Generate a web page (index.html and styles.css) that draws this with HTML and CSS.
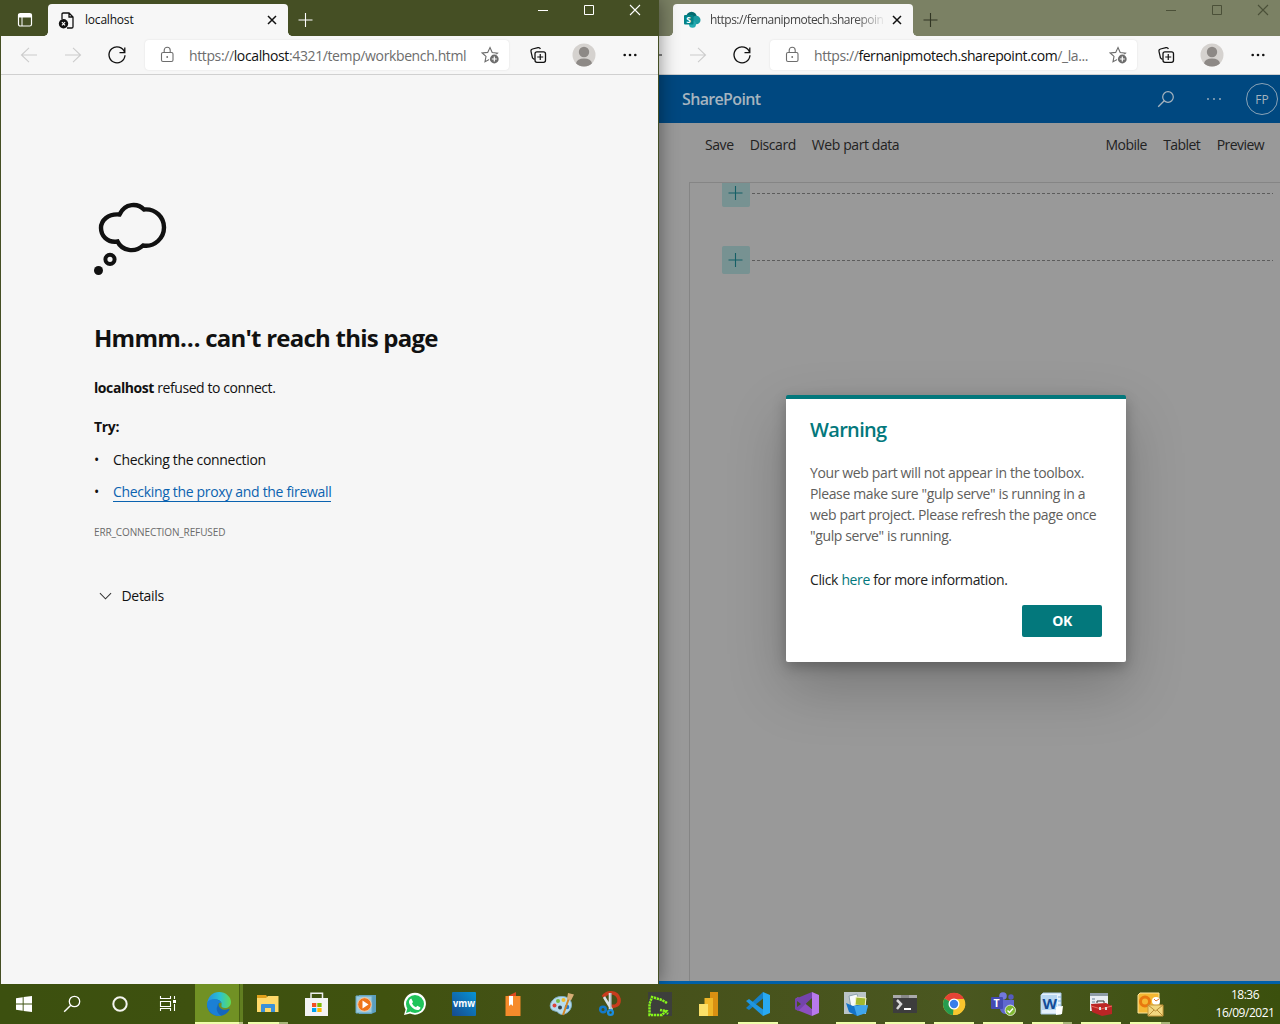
FILE: index.html
```html
<!DOCTYPE html>
<html lang="en">
<head>
<meta charset="utf-8">
<title>Desktop</title>
<link rel="stylesheet" href="styles.css">
</head>
<body>
<svg class="defs" aria-hidden="true">
  <symbol id="back" viewBox="0 0 20 20"><path d="M18 10H2.500M10 2.800 2.500 10l7.500 7.200" fill="none" stroke="currentColor" stroke-width="1.100"/></symbol>
  <symbol id="reload" viewBox="0 0 20 20"><path d="M17.600 7.300A8 8 0 1 0 18 10.300M17.800 2.500v5.200h-5.300" fill="none" stroke="currentColor" stroke-width="1.300"/></symbol>
  <symbol id="lock" viewBox="0 0 16 18"><rect x="2.500" y="6.500" width="11.500" height="9" rx="1.500" fill="none" stroke="currentColor" stroke-width="1.100"/><path d="M5.200 6.500V4.200a3 3 0 0 1 6 0v2.300" fill="none" stroke="currentColor" stroke-width="1.100"/><circle cx="8.200" cy="11" r=".9" fill="currentColor"/></symbol>
  <symbol id="star" viewBox="0 0 18 18"><path d="m9 1.500 2.200 5 5.300.6-4 3.600L13 15l-4-2-5 2.700 1-5.300L1.200 7l5.500-.6z" fill="none" stroke="currentColor" stroke-width="1.100"/><circle cx="13.300" cy="13" r="5.300" fill="#fff"/><circle cx="13.300" cy="13" r="4.400" fill="currentColor"/><path d="M13.300 10.500v5M10.800 13h5" stroke="#fff" stroke-width="1.200"/></symbol>
  <symbol id="collections" viewBox="0 0 18 18"><path d="M3.500 12 2 5.500Q1.600 3.500 3.500 3L9 1.600q1.800-.4 2.400 1.400M5.500 13.500 3.500 12" fill="none" stroke="currentColor" stroke-width="1.200"/><rect x="6" y="5.800" width="10.500" height="10.500" rx="2" fill="#f7f7f7" stroke="currentColor" stroke-width="1.300"/><path d="M11.250 8v6M8.250 11h6" stroke="currentColor" stroke-width="1.200"/></symbol>
  <symbol id="avatar" viewBox="0 0 24 24"><circle cx="12" cy="12" r="11.500" fill="#d5d2cf"/><circle cx="12" cy="9" r="5.200" fill="#8d8986"/><path d="M4 20.200Q5 15.500 12 15.500t8 4.700a11.500 11.500 0 0 1-16 0" fill="#8d8986"/></symbol>
  <symbol id="dots" viewBox="0 0 16 16"><g fill="currentColor"><circle cx="2.700" cy="8" r="1.300"/><circle cx="8" cy="8" r="1.300"/><circle cx="13.300" cy="8" r="1.300"/></g></symbol>
  <symbol id="thindots" viewBox="0 0 16 16"><g fill="currentColor"><circle cx="2" cy="8" r=".9"/><circle cx="8" cy="8" r=".9"/><circle cx="14" cy="8" r=".9"/></g></symbol>
  <symbol id="min" viewBox="0 0 12 12"><path d="M1 6.500h10" stroke="currentColor"/></symbol>
  <symbol id="max" viewBox="0 0 12 12"><path d="M1.500 1.500h9v9h-9z" fill="none" stroke="currentColor"/></symbol>
  <symbol id="close" viewBox="0 0 12 12"><path d="m1 1 10 10M11 1 1 11" stroke="currentColor" stroke-width="1.100"/></symbol>
  <symbol id="tabclose" viewBox="0 0 12 12"><path d="m2 2 8 8M10 2 2 10" stroke="currentColor" stroke-width="1.500"/></symbol>
  <symbol id="plus" viewBox="0 0 16 16"><path d="M7.500 1v14M.5 8h14" stroke="currentColor" stroke-width="1.100"/></symbol>
</svg>

<div class="desktop">
  <section class="window window-right">
    <header class="titlebar">
      <div class="tab">
        <svg class="favicon" viewBox="0 0 18 18"><circle cx="8.500" cy="6" r="5.300" fill="#036c70"/><circle cx="13.200" cy="9" r="4.300" fill="#1a9ba1"/><circle cx="9.500" cy="13.300" r="3.500" fill="#24aab0"/><rect x="1" y="4" width="9.500" height="9.500" rx="1" fill="#038387"/><text x="3.200" y="11.800" font-size="8.500" font-weight="700" fill="#fff">S</text></svg>
        <span class="tab-title faded">https://fernanipmotech.sharepoin</span>
        <svg class="tab-x"><use href="#tabclose"/></svg>
      </div>
      <svg class="newtab"><use href="#plus"/></svg>
      <div class="controls"><svg><use href="#min"/></svg><svg><use href="#max"/></svg><svg><use href="#close"/></svg></div>
    </header>
    <nav class="toolbar">
      <svg class="nav"><use href="#back"/></svg>
      <svg class="nav off flip"><use href="#back"/></svg>
      <svg class="nav"><use href="#reload"/></svg>
      <div class="address"><svg class="lock"><use href="#lock"/></svg><span class="url url-sp">https://<b>fernanipmotech.sharepoint.com</b>/_la...</span><svg class="star"><use href="#star"/></svg></div>
      <svg class="coll"><use href="#collections"/></svg>
      <svg class="avatar"><use href="#avatar"/></svg>
      <svg class="dots"><use href="#dots"/></svg>
    </nav>
    <main class="sharepoint">
      <header class="suite">
        <span class="brand">SharePoint</span>
        <svg class="suite-search" viewBox="0 0 18 18"><circle cx="11" cy="7" r="5.300" fill="none" stroke="currentColor" stroke-width="1.200"/><path d="m7.200 10.800-6 6" stroke="currentColor" stroke-width="1.300"/></svg>
        <svg class="suite-dots"><use href="#thindots"/></svg>
        <span class="persona">FP</span>
      </header>
      <div class="commands"><span>Save</span><span>Discard</span><span class="grow">Web part data</span><span>Mobile</span><span>Tablet</span><span>Preview</span></div>
      <div class="canvas">
        <div class="zone"><i><svg><use href="#plus"/></svg></i><hr></div>
        <div class="zone"><i><svg><use href="#plus"/></svg></i><hr></div>
      </div>
    </main>
    <div class="dialog">
      <h2>Warning</h2>
      <p class="message">Your web part will not appear in the toolbox.<br>Please make sure "gulp serve" is running in a<br>web part project. Please refresh the page once<br>"gulp serve" is running.</p>
      <p class="info">Click <a>here</a> for more information.</p>
      <button>OK</button>
    </div>
  </section>

  <section class="window window-left">
    <header class="titlebar">
      <svg class="tabmenu" viewBox="0 0 16 16"><rect x="1.500" y="1.500" width="13" height="12.500" rx="1.800" fill="none" stroke="#fff" stroke-width="1.200"/><path d="M1.500 2h13v3.500h-13z" fill="#fff"/><path d="M5 5v9" stroke="#fff"/></svg>
      <div class="tab">
        <svg class="favicon" viewBox="0 0 18 18"><path d="M4 8V3.300Q4 2 5.300 2H11l4 4v9.700q0 1.300-1.300 1.300H9M11 2v4h4" fill="none" stroke="#111" stroke-width="1.300"/><circle cx="5.500" cy="12.800" r="4.700" fill="#111"/><path d="m3.900 11.200 3.200 3.200m0-3.200-3.200 3.200" stroke="#fff" stroke-width="1.100"/></svg>
        <span class="tab-title">localhost</span>
        <svg class="tab-x"><use href="#tabclose"/></svg>
      </div>
      <svg class="newtab"><use href="#plus"/></svg>
      <div class="controls"><svg><use href="#min"/></svg><svg><use href="#max"/></svg><svg><use href="#close"/></svg></div>
    </header>
    <nav class="toolbar">
      <svg class="nav off"><use href="#back"/></svg>
      <svg class="nav off flip"><use href="#back"/></svg>
      <svg class="nav"><use href="#reload"/></svg>
      <div class="address"><svg class="lock"><use href="#lock"/></svg><span class="url">https://<b>localhost</b>:4321/temp/workbench.html</span><svg class="star"><use href="#star"/></svg></div>
      <svg class="coll"><use href="#collections"/></svg>
      <svg class="avatar"><use href="#avatar"/></svg>
      <svg class="dots"><use href="#dots"/></svg>
    </nav>
    <main class="error">
      <svg class="cloud" viewBox="0 0 74 74"><path d="M25.500 11.500C31 -.5 44 0 50 6.500c12-1 20 8 20 18s-9 20-21 18C41 50 28 48 23.500 38.500 13 40 7 32.500 7 25S14 10.500 25.500 11.500z" fill="none" stroke="#111" stroke-width="4.400"/><circle cx="16" cy="56.300" r="4.600" fill="none" stroke="#111" stroke-width="4"/><circle cx="4.500" cy="67.500" r="4.500" fill="#111"/></svg>
      <h1>Hmmm… can't reach this page</h1>
      <p class="refused"><b>localhost</b> refused to connect.</p>
      <h3>Try:</h3>
      <ul><li>Checking the connection</li><li><a>Checking the proxy and the firewall</a></li></ul>
      <p class="code">ERR_CONNECTION_REFUSED</p>
      <div class="details"><svg viewBox="0 0 14 8"><path d="m1 1 6 6 6-6" fill="none" stroke="#333" stroke-width="1.100"/></svg><span>Details</span></div>
    </main>
  </section>

  <footer class="taskbar">
    <div class="sys"><svg viewBox="0 0 24 24"><path d="M4 6.200 10.700 5.200v6.300H4zM11.600 5.100 20 4v7.500h-8.400zM4 12.500h6.700v6.300L4 17.800zM11.600 12.500H20V20l-8.400-1.100z" fill="#fff"/></svg></div>
    <div class="sys"><svg viewBox="0 0 24 24"><circle cx="14.500" cy="9.500" r="5.200" fill="none" stroke="#fff" stroke-width="1.300"/><path d="m10.800 13.200-6.600 6.600" stroke="#fff" stroke-width="1.400"/></svg></div>
    <div class="sys"><svg viewBox="0 0 24 24"><circle cx="12" cy="12" r="6.700" fill="none" stroke="#f4f4ee" stroke-width="2"/></svg></div>
    <div class="sys"><svg viewBox="0 0 24 24"><path d="M4.500 4v2.500h10V4M4.500 19v-2.500h10V19M4.500 9.500h10v5h-10zM18.500 4v3M18.500 12v7" fill="none" stroke="#fff" stroke-width="1.100"/><path d="M17 8h3v3h-3z" fill="#fff"/></svg></div>
    <div class="app active"><svg viewBox="0 0 24 24"><defs><linearGradient id="eg" x2="1"><stop stop-color="#258fe0"/><stop offset=".55" stop-color="#2bc3d2"/><stop offset="1" stop-color="#63db52"/></linearGradient></defs><path d="M0 12c0 7 5 12 12 12 5 0 9-3 10.500-6.500.3-.8-.3-1-1-.6-4 2-10 0-10-5L14 8 6 6z" fill="#1467bd"/><path d="M0 12C1 4 6 0 12 0c7 0 12 5 12 10 0 4-3 6-6 6-2.500 0-4-1-3.500-2.500C15.500 10 12.500 7.500 9 7.500S1 8.500 0 12z" fill="url(#eg)"/><path d="M0 12c0-3 4-5.500 8.500-4.500C12 8 14 9 14.500 11c-2-1-4 0-4 3-2 3 0 8 4 9.700C6 25 0 19 0 12z" fill="#1b80d5"/></svg></div>
    <div class="app open multi"><svg viewBox="0 0 24 24"><path d="M1 3h9l2 2.500h10V20H1z" fill="#e0a11b"/><path d="M1 6h9l2-2h10.500v16H1z" fill="#ffd96a"/><path d="M5 20v-7q0-1 1-1h12q1 0 1 1v7h-4v-4H9v4z" fill="#3b91da"/></svg></div>
    <div class="app"><svg viewBox="0 0 24 24"><path d="M6 7V1.200h11.500V7" fill="none" stroke="#eee" stroke-width="1.500"/><path d="M0 6h23v18H0z" fill="#f3f3f3"/><path d="M7 11h4.300v4H7z" fill="#f25022"/><path d="M12.300 11h4.300v4h-4.300z" fill="#7fba00"/><path d="M7 16h4.300v4H7z" fill="#00a4ef"/><path d="M12.300 16h4.300v4h-4.300z" fill="#ffb900"/></svg></div>
    <div class="app"><svg viewBox="0 0 24 24"><path d="M5 3h17v17l-5 2H5z" fill="#5b9fbe"/><path d="M2 4h16v17H2z" fill="#9acbe0" stroke="#6ba8c3"/><circle cx="10.500" cy="12.500" r="6.800" fill="#ef751a" stroke="#f7c8a0"/><path d="m8.500 8.500 6 4-6 4z" fill="#fff"/></svg></div>
    <div class="app"><svg viewBox="0 0 24 24"><path d="M1 23 2.600 17.500A11 11 0 1 1 7 21.500z" fill="#fff"/><circle cx="12" cy="12" r="9" fill="#20c45a"/><path d="m3 21 1.500-5 3 3.500z" fill="#20c45a"/><path d="M8.300 6.500 10 10 9 11.500q1.500 3 4 3.800l1.300-1.500 3.200 1.700c-.5 3-3.500 3-6 1.700-3-1.600-5.200-4.500-5.500-7 0-2 1-3.500 2.300-3.700z" fill="#fff"/></svg></div>
    <div class="app"><svg viewBox="0 0 24 24"><defs><linearGradient id="vg" x1="0" y1="1" x2="1" y2="0"><stop stop-color="#174a8e"/><stop offset="1" stop-color="#0793d4"/></linearGradient></defs><rect width="24" height="24" rx="1" fill="url(#vg)"/><text class="vmw" x="1" y="15" textLength="22" lengthAdjust="spacingAndGlyphs">vmw</text></svg></div>
    <div class="app"><svg viewBox="0 0 24 24"><path d="m7 4 8-4v4z" fill="#dd4920"/><path d="M4.500 4h15v20h-15z" fill="#f68b2b"/><path d="M8 4h4v10l-2-1.800L8 14z" fill="#fff"/></svg></div>
    <div class="app"><svg viewBox="0 0 24 24"><path d="M12 4.500C4 4-1 11 .500 15.500 2 20 6 18 8.500 21c4 4 13-1 13-8 0-5.500-4-8.500-9.500-8.500z" fill="#b7dcec" stroke="#7eadc3"/><circle cx="4.500" cy="13.500" r="2" fill="#db443b"/><circle cx="8" cy="9" r="2" fill="#76b944"/><circle cx="13.500" cy="8" r="2" fill="#efbb29"/><circle cx="10" cy="15.500" r="2" fill="#36424a"/><circle cx="17" cy="15" r="2.300" fill="#287ac8"/><path d="m19 6-6 17" stroke="#d48626" stroke-width="2"/><path d="m17 7 1-6 6 1.500-3 6z" fill="#d6ad75"/></svg></div>
    <div class="app"><svg viewBox="0 0 24 24"><path d="M4 5C8-1 18-1 20 7c1 6-4 8-8 7" fill="none" stroke="#c93c1d" stroke-width="3.500"/><path d="M11 1v16M5 5l8 13" stroke="#d9e1e5" stroke-width="2.600"/><path d="M12 1v16" stroke="#9ba8ad"/><circle cx="4" cy="17.500" r="2.800" fill="none" stroke="#1379ca" stroke-width="2.500"/><circle cx="11.500" cy="20.500" r="2.400" fill="none" stroke="#1a8de0" stroke-width="2.300"/></svg></div>
    <div class="app"><svg viewBox="0 0 24 24"><path d="M0 0h24v24H0z" fill="#3d3f3b"/><path d="M19 11 14 8 4 5 1.500 12v11H14l4-4-6-1m5 1 3 3" fill="none" stroke="#86f51a" stroke-width="2.500" stroke-dasharray="2.300 .7"/></svg></div>
    <div class="app"><svg viewBox="0 0 24 24"><path d="M13 0h8v24h-8z" fill="#d99012"/><path d="M7.500 6H16v18H7.500z" fill="#efb728"/><path d="M2 12h9v12H2z" fill="#fae068"/></svg></div>
    <div class="app open"><svg viewBox="0 0 24 24"><path d="M0 16 17 0v6.500L3 18z" fill="#1580c8"/><path d="m0 9 3-2 14 10.500V24z" fill="#2096df"/><path d="m17 0 7 3v18l-7 3z" fill="#28a9f2"/></svg></div>
    <div class="app"><svg viewBox="0 0 24 24"><path d="m0 7 3-2 14 12v7L2 18l-2-1z" fill="#8c4fc1"/><path d="m0 17 3 2L17 6V0L0 7z" fill="#7444ab"/><path d="m2 9 4 3-4 3zm15-2-6 5 6 5z" fill="#47551d"/><path d="m17 0 7 3v18l-7 3z" fill="#b879ec"/></svg></div>
    <div class="app open"><svg viewBox="0 0 24 24"><path d="M0 0h22v22H0z" fill="#bac4c7"/><path d="m5 4 8-2 3 12-9 2z" fill="#f7fbfc" stroke="#8da1ac"/><path d="m12 5 10 1-1 8-10-1z" fill="#a1b830" stroke="#f5f5cb"/><path d="m2 11 7 3 4-1 11 1-2 7-9 3-8-4z" fill="#1473c8"/><path d="m10 14 14-1-2 8-9 3z" fill="#40a6ec"/></svg></div>
    <div class="app open"><svg viewBox="0 0 24 24"><path d="M0 3h24v18H0z" fill="#3d3d3d"/><path d="M0 3h24v3H0z" fill="#aaa"/><path d="M8 3h8v3H8z" fill="#888"/><path d="m4 8 4 4-4 5" fill="none" stroke="#d8d8d8" stroke-width="2.500"/><path d="M11 17h7" stroke="#fff" stroke-width="2"/></svg></div>
    <div class="app open"><svg viewBox="0 0 24 24"><circle cx="12" cy="12" r="11" fill="#f8c52e"/><path d="M12 12 2.500 6.500A11 11 0 0 1 22 7z" fill="#e54335"/><path d="M12 12 2.500 6.500A11 11 0 0 0 11 23l4.500-8z" fill="#279b4e"/><path d="M12 7h10A11 11 0 0 1 11 23z" fill="#f8c52e"/><circle cx="12" cy="12" r="5.500" fill="#fff"/><circle cx="12" cy="12" r="4.200" fill="#397de9"/></svg></div>
    <div class="app open"><svg viewBox="0 0 24 24"><circle cx="12" cy="4" r="3.800" fill="#7278dc"/><circle cx="20" cy="5" r="2.700" fill="#555bc0"/><path d="M9 8h14v8q-2 6-8 6-5 0-6-5z" fill="#6068ce"/><rect y="5" width="12" height="12" rx="1" fill="#454bb2"/><text x="2.600" y="15" font-size="10.500" font-weight="700" fill="#fff">T</text><circle cx="19.300" cy="18.300" r="5.200" fill="#7fb831" stroke="#fff" stroke-width=".7"/><path d="m16.500 18.500 2 2 3.500-4" fill="none" stroke="#fff" stroke-width="1.400"/></svg></div>
    <div class="app open multi"><svg viewBox="0 0 24 24"><path d="M3 1h18v21H1V3z" fill="#e7f2fc" stroke="#a8c7e4"/><path d="M2 3h15v15H2z" fill="#b8d7f2"/><text class="w" x="2.500" y="16.500">W</text><path d="M18 5h3m-3 4h3m-3 4h3" stroke="#80b3df"/><path d="m16 15 7-1-1 8-6 1z" fill="#fff"/></svg></div>
    <div class="app open"><svg viewBox="0 0 24 24"><path d="M1 1h18v18H1z" fill="#e9eef3"/><path d="M1 1h18v3H1z" fill="#8f9da7"/><path d="M3 7h3m-3 3h3m-3 3h3" stroke="#68839a"/><path d="M2 12 17 11l6 3v8l-10 2-10-4z" fill="#bb2525"/><path d="m2 14 10 3 11-3" fill="none" stroke="#ee6a60"/><path d="M8 11V9h7v2" fill="none" stroke="#333"/><path d="M10 15h2v3h-2m6-3h2v3h-2" fill="#ddd"/></svg></div>
    <div class="app open multi"><svg viewBox="0 0 24 24"><path d="M2 1h19v20H0V3z" fill="#f4b833" stroke="#fbe39a"/><circle cx="7" cy="9.500" r="4.500" fill="none" stroke="#e8780f" stroke-width="3"/><circle cx="18" cy="9" r="4" fill="#fff"/><path d="m16 7 2 2 3-2" fill="none" stroke="#dd762c"/><path d="M10 13h15v11H10z" fill="#f2d77f" stroke="#c7983c"/><path d="m10 13 7.500 6 7.500-6M10 24l6-6m3 0 6 6" fill="none" stroke="#ba8d35"/></svg></div>
    <div class="clock"><span class="time">18:36</span><span class="date">16/09/2021</span></div>
  </footer>
</div>
</body>
</html>
```
FILE: styles.css
```css
* { box-sizing: border-box; }
body { margin: 0; font-family: "Open Sans", "Noto Sans", sans-serif; font-size: 14px; color: #111; }
h1, h2, h3, p, ul { margin: 0; }
svg { display: block; flex: none; overflow: visible; }
.defs { position: absolute; width: 0; height: 0; }
.desktop { position: relative; width: 1280px; height: 1024px; overflow: hidden; background: #0060a8; }

.window { position: absolute; top: 0; display: flex; flex-direction: column; }
.window-left { left: 0; width: 659px; height: 984px; border: solid #454f24; border-width: 0 1px; background: #f6f6f6; box-shadow: 0 0 18px rgba(0, 0, 0, .45); }
.window-right { left: 625px; width: 662px; height: 981px; background: #999; padding-left: 1px; }
.titlebar { display: flex; align-items: flex-start; height: 36px; flex: none; background: #454f24; color: #fff; }
.window-right .titlebar { background: #7b8164; color: #303523; margin-left: -1px; padding-left: 48px; }
.tabmenu { width: 16px; height: 16px; margin: 12px 15px 0 16px; }
.tab { position: relative; display: flex; align-items: center; width: 240px; height: 32px; margin-top: 4px; padding-left: 10px; background: #f7f7f7; border-radius: 4px 4px 0 0; color: #111; }
.tab::before, .tab::after { content: ""; position: absolute; bottom: 0; width: 4px; height: 4px; }
.tab::before { left: -4px; background: radial-gradient(circle at 0 0, transparent 3.5px, #f7f7f7 4px); }
.tab::after { right: -4px; background: radial-gradient(circle at 100% 0, transparent 3.5px, #f7f7f7 4px); }
.favicon { width: 18px; height: 18px; margin-right: 9px; }
.tab-title { flex: 1; font-size: 12px; line-height: 16px; white-space: nowrap; letter-spacing: -.2px; }
.faded { color: #444; letter-spacing: -.53px; mask-image: linear-gradient(90deg, #000 145px, transparent 176px); }
.tab-x { width: 12px; height: 12px; margin: 0 10.500px 0 1px; }
.newtab { width: 16px; height: 16px; margin: 12px 0 0 10px; }
.controls { display: flex; gap: 34px; margin: 4px 17px 0 auto; }
.controls svg { width: 12px; height: 12px; }
.window-right .controls { margin-right: 18px; color: #4b5038; }

.toolbar { display: flex; align-items: center; height: 39px; flex: none; background: #f7f7f7; border-bottom: 1px solid #d0d0d0; padding-left: 18px; }
.window-right .toolbar { padding-right: 1px; }
.nav { width: 20px; height: 20px; margin-right: 24px; }
.off { color: #ccc; }
.flip { transform: scaleX(-1); }
.address { display: flex; align-items: center; flex: 1; min-width: 0; height: 30px; margin: 0 1px 0 -6px; padding: 0 10px 0 14px; background: #fff; border-radius: 4px; box-shadow: 0 0 2px #ddd; color: #6d6d6d; }
.lock { width: 16px; height: 18px; margin-right: 14px; }
.url { flex: 1; font-size: 14px; white-space: nowrap; letter-spacing: -.38px; }
.url b { color: #111; font-weight: 400; }
.url-sp { letter-spacing: -.42px; }
.star { width: 18px; height: 18px; }
.coll { width: 18px; height: 18px; margin-left: 19px; }
.avatar { width: 24px; height: 24px; margin-left: 25px; }
.dots { width: 16px; height: 16px; margin: 0 20px 0 26px; }

.sharepoint { flex: 1; display: flex; flex-direction: column; color: #222; }
.suite { display: flex; align-items: center; height: 48px; padding: 0 9px 0 56px; background: #004880; color: #a6b4bf; }
.brand { flex: 1; font-size: 16px; font-weight: 600; letter-spacing: -.65px; }
.suite-search { width: 18px; height: 18px; margin-right: 31px; }
.suite-dots { width: 16px; height: 16px; margin-right: 24px; }
.persona { width: 32px; height: 32px; border: 1px solid #8aa3b7; border-radius: 50%; font-size: 12px; line-height: 32px; text-align: center; }
.commands { display: flex; align-items: center; gap: 16px; height: 44px; padding: 0 22.500px 2px 79px; letter-spacing: -.42px; }
.grow { flex: 1; }
.grow ~ span { letter-spacing: -.55px; margin-right: .4px; }
.canvas { flex: 1; margin: 15px 0 0 63px; border: solid #858585; border-width: 1px 0 0 1px; padding-left: 32px; }
.zone { display: flex; align-items: center; gap: 2px; height: 28px; padding-right: 14px; }
.zone:first-child { height: 24px; align-items: flex-end; margin-bottom: 39px; overflow: hidden; }
.zone i { display: grid; place-items: center; width: 28px; height: 28px; border-radius: 2px; background: #779292; color: #145f66; }
.zone i svg { width: 16px; height: 16px; }
.zone hr { flex: 1; height: 1px; margin: 0; border: 0; background: repeating-linear-gradient(90deg, #5c5c5c 0 3px, transparent 3px 5px); }
.zone:first-child hr { margin-bottom: 13px; }

.dialog { position: absolute; left: 161px; top: 395px; width: 340px; height: 267px; display: flex; flex-direction: column; padding: 17px 24px 0; background: #fff; border-top: 4px solid #03787c; border-radius: 2px; box-shadow: 0 25px 58px rgba(0, 0, 0, .22), 0 5px 14px rgba(0, 0, 0, .25); }
.dialog h2 { font-size: 20px; line-height: 27px; font-weight: 600; color: #03787c; letter-spacing: -.68px; }
.message { margin-top: 19px; line-height: 21px; color: #605e5c; letter-spacing: -.37px; white-space: nowrap; }
.info { margin-top: 23px; line-height: 21px; color: #222; letter-spacing: -.37px; }
.info a { color: #03787c; }
.dialog button { align-self: flex-end; width: 80px; height: 32px; margin-top: 15px; padding: 0 0 2px; border: 0; border-radius: 2px; background: #03787c; color: #fff; font: 700 14px "Open Sans", sans-serif; letter-spacing: -.5px; }

.error { display: flex; flex-direction: column; align-items: flex-start; padding: 128px 0 0 93px; letter-spacing: -.32px; }
.cloud { width: 74px; height: 74px; }
.error h1 { margin-top: 45px; font-size: 24px; line-height: 32px; font-weight: 700; letter-spacing: -.77px; }
.refused { margin-top: 24px; line-height: 20px; letter-spacing: -.42px; }
.error h3 { margin-top: 19px; font-size: 14px; line-height: 20px; letter-spacing: -.3px; }
.error ul { margin-top: 7px; padding: 0; list-style: none; }
.error li { display: flex; gap: 14px; height: 32px; line-height: 32px; }
.error li::before { content: "•"; width: 5px; font-size: 14px; }
.error li a { align-self: center; height: 20px; line-height: 20px; color: #0b63b0; border-bottom: 1px solid #0b63b0; }
.code { margin-top: 16px; font-size: 10px; line-height: 16px; color: #6b6b6b; letter-spacing: -.11px; }
.details { display: flex; align-items: center; gap: 10px; margin: 46px 0 0 4.500px; line-height: 20px; }
.details svg { width: 13px; height: 8px; }

.taskbar { position: absolute; left: 0; right: 0; bottom: 0; display: flex; height: 40px; background: linear-gradient(90deg, #3c500f, #40520f 30%, #46511a 50%, #4a5720 75%, #3b500d); color: #fff; }
.sys { display: grid; place-items: center; width: 48px; }
.sys svg, .app svg { width: 24px; height: 24px; }
.app { position: relative; display: grid; place-items: center; width: 49px; }
.sys + .app { margin-left: 2px; }
.app.active { background: linear-gradient(90deg, transparent 1px, #719124 1px 45px, #486013 45px 46px, #617e20 46px); }
.app.active::after, .app.open::after { content: ""; position: absolute; left: 5px; bottom: 0; width: 40px; height: 2px; background: #efffab; }
.app.active::after { left: 1px; width: 48px; background: linear-gradient(90deg, #efffab 44px, #b7c384 44px); }
.app.multi::after { background: linear-gradient(90deg, #efffab 31px, #a7b678 31px); }
.vmw { font-size: 10px; font-weight: 700; fill: #fff; }
.w { font-size: 15px; font-weight: 700; fill: #134c97; }
.clock { display: flex; flex-direction: column; align-items: center; margin-left: auto; width: 70px; padding-top: 2px; font-size: 12px; line-height: 18px; letter-spacing: -.48px; }
```
